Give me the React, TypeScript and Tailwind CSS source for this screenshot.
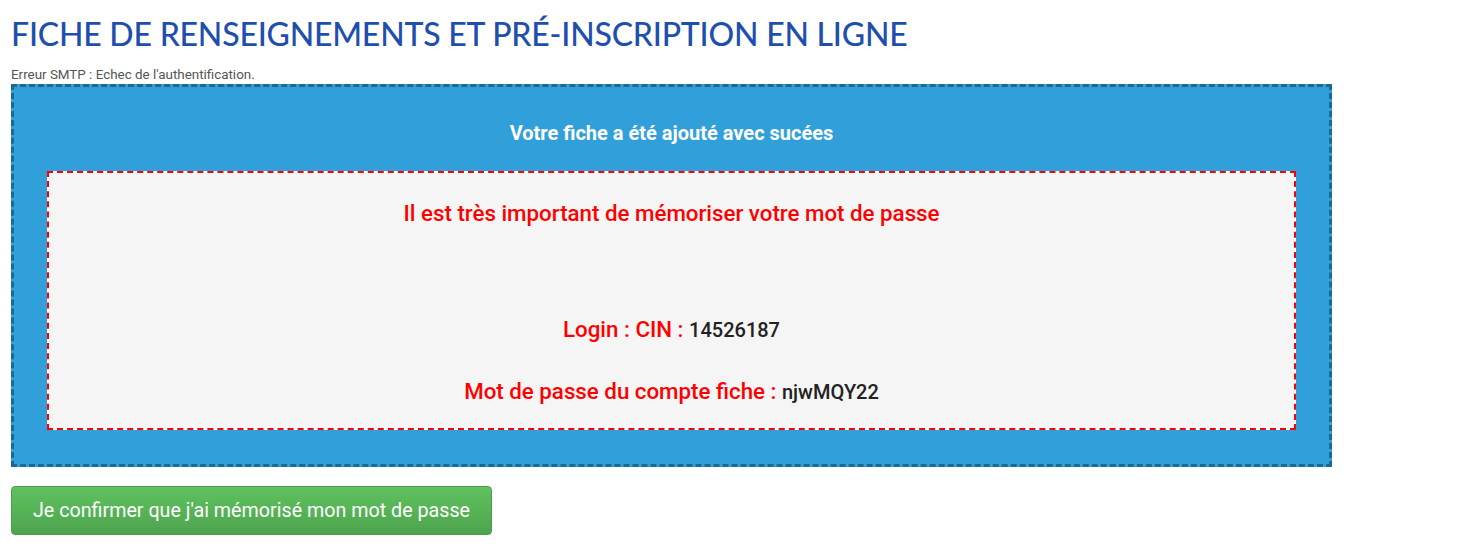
import React from "react";

export default function App() {
  return (
    <div className="min-h-[549px] bg-white px-[11px]" style={{ fontFamily: "Roboto, 'Liberation Sans', sans-serif" }}>
      <h1
        className="pt-[14px] text-[32px] font-medium leading-[40px] tracking-[-0.2px] text-[#1f4fad]"
        style={{ fontFamily: "Lato, 'Open Sans', sans-serif" }}
      >
        FICHE DE RENSEIGNEMENTS ET PRÉ-INSCRIPTION EN LIGNE
      </h1>
      <div className="mt-[12px] text-[13.4px] leading-[18px] text-[#555]">Erreur SMTP : Echec de l'authentification.</div>
      <div className="w-[1321px] border-[3px] border-dashed border-[#1b6a96] bg-[#319fd9] px-[33px] pb-[34px] pt-[34px]">
        <div className="text-center text-[20px] font-bold leading-[24px] text-white">Votre fiche a été ajouté avec sucées</div>
        <div className="mt-[26px] bg-white">
          <div className="h-[259px] border-2 border-dashed border-[#ff0000] bg-[#f5f5f5] bg-clip-padding text-center">
            <div className="mt-[26px] text-[22.3px] font-medium leading-[28px] text-[#ff0000]">
              Il est très important de mémoriser votre mot de passe
            </div>
            <div className="mt-[88px] text-[22.3px] font-medium leading-[28px] text-[#ff0000]">
              Login : CIN : <span className="text-[20px] text-[#222]">14526187</span>
            </div>
            <div className="mt-[33px] text-[22.3px] font-medium leading-[28px] text-[#ff0000]">
              Mot de passe du compte fiche : <span className="text-[20px] text-[#222]">njwMQY22</span>
            </div>
          </div>
        </div>
      </div>
      <button className="mt-[19px] h-[49px] w-[481px] rounded-[4px] border border-[#4a9d4a] bg-gradient-to-b from-[#5fc25f] to-[#4ea44e] text-[19.7px] text-white">
        Je confirmer que j'ai mémorisé mon mot de passe
      </button>
    </div>
  );
}
